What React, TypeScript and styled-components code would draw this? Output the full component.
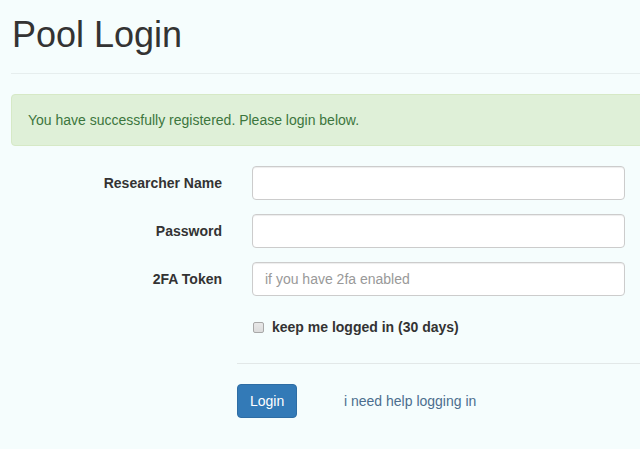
import React from "react";
import styled, { createGlobalStyle } from "styled-components";

const Global = createGlobalStyle`
  html, body { margin: 0; padding: 0; background: #f5fdfd; overflow: hidden; }
  body { font-family: "Liberation Sans", Arial, Helvetica, sans-serif; font-size: 14px; line-height: 20px; color: #333; }
  * { box-sizing: border-box; }
`;

const Page = styled.div`
  width: 700px;
  padding-left: 11px;
`;

const Header = styled.div`
  padding: 15px 0 18px 1px;
  border-bottom: 1px solid #e6eeee;
`;

const Title = styled.h1`
  margin: 0;
  font-size: 36px;
  line-height: 40px;
  font-weight: 400;
  color: #333;
`;

const Alert = styled.div`
  margin-top: 20px;
  padding: 15px 16px;
  background: #dff0d8;
  border: 1px solid #d6e9c6;
  border-radius: 4px;
  color: #3c763d;
`;

const Form = styled.form`
  margin-top: 20px;
  display: grid;
  grid-template-columns: 226px 1fr;
  row-gap: 14px;
`;

const Label = styled.label`
  padding: 7px 15px 0 0;
  text-align: right;
  font-weight: 700;
  white-space: nowrap;
`;

const Field = styled.div`
  padding-left: 15px;
  width: 388px;
`;

const Input = styled.input`
  display: block;
  width: 100%;
  height: 34px;
  padding: 6px 12px;
  font-family: inherit;
  font-size: 14px;
  color: #555;
  background: #fff;
  border: 1px solid #ccc;
  border-radius: 4px;
  box-shadow: inset 0 1px 1px rgba(0, 0, 0, 0.075);
  outline: none;
  &::placeholder { color: #999; }
`;

const Spacer = styled.div``;

const CheckRow = styled.label`
  padding: 7px 0 10px 16px;
  display: flex;
  align-items: center;
  gap: 8px;
  font-weight: 700;
`;

const Box = styled.span`
  width: 11px;
  height: 11px;
  border: 1px solid #a8a8a8;
  border-radius: 2px;
  background: linear-gradient(#e8e8e8, #dcdcdc);
`;

const Divider = styled.hr`
  grid-column: 2;
  margin: 2px 0 6px 0;
  border: 0;
  border-top: 1px solid #e2e8e8;
  width: 420px;
`;

const Actions = styled.div`
  grid-column: 2;
  display: flex;
  align-items: center;
`;

const Button = styled.button`
  height: 34px;
  width: 60px;
  padding: 6px 12px;
  font-family: inherit;
  font-size: 14px;
  color: #fff;
  background: #337ab7;
  border: 1px solid #2e6da4;
  border-radius: 4px;
`;

const HelpLink = styled.a`
  margin-left: 47px;
  color: #4c6e8e;
  text-decoration: none;
`;

export default function App() {
  return (
    <>
      <Global />
      <Page>
        <Header>
          <Title>Pool Login</Title>
        </Header>
        <Alert>You have successfully registered. Please login below.</Alert>
        <Form>
          <Label>Researcher Name</Label>
          <Field>
            <Input type="text" />
          </Field>
          <Label>Password</Label>
          <Field>
            <Input type="password" />
          </Field>
          <Label>2FA Token</Label>
          <Field>
            <Input type="text" placeholder="if you have 2fa enabled" />
          </Field>
          <Spacer />
          <CheckRow>
            <Box />
            keep me logged in (30 days)
          </CheckRow>
          <Divider />
          <Actions>
            <Button type="button">Login</Button>
            <HelpLink href="#">i need help logging in</HelpLink>
          </Actions>
        </Form>
      </Page>
    </>
  );
}
